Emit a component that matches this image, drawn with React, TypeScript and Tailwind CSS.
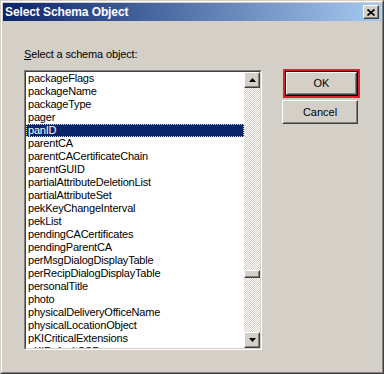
const items = [
  'packageFlags',
  'packageName',
  'packageType',
  'pager',
  'panID',
  'parentCA',
  'parentCACertificateChain',
  'parentGUID',
  'partialAttributeDeletionList',
  'partialAttributeSet',
  'pekKeyChangeInterval',
  'pekList',
  'pendingCACertificates',
  'pendingParentCA',
  'perMsgDialogDisplayTable',
  'perRecipDialogDisplayTable',
  'personalTitle',
  'photo',
  'physicalDeliveryOfficeName',
  'physicalLocationObject',
  'pKICriticalExtensions',
  'pKIDefaultCSPs',
];

const selected = 'panID';

// classic raised bevel: white / face on top-left, dark / shadow on bottom-right
function Raised({ className = '', children }: { className?: string; children?: React.ReactNode }) {
  return (
    <div className={`border border-t-white border-l-white border-b-[#404040] border-r-[#404040] ${className}`}>
      <div className="flex h-full w-full items-center justify-center border border-t-[#d4d0c8] border-l-[#d4d0c8] border-b-[#808080] border-r-[#808080] bg-[#d4d0c8]">
        {children}
      </div>
    </div>
  );
}

function Arrow({ down }: { down?: boolean }) {
  return (
    <svg width="7" height="4" viewBox="0 0 7 4" aria-hidden="true">
      <path d={down ? 'M0 0h7L3.5 4z' : 'M3.5 0 7 4H0z'} fill="#000" />
    </svg>
  );
}

function CloseGlyph() {
  return (
    <svg width="8" height="7" viewBox="0 0 8 7" aria-hidden="true">
      <path d="M0.5 0.5 7.5 6.5M7.5 0.5 0.5 6.5" stroke="#000" strokeWidth="1.7" />
    </svg>
  );
}

function Button({ label, isDefault }: { label: string; isDefault?: boolean }) {
  if (isDefault) {
    return (
      <div className="ml-[1px] h-[29px] w-[77px] border-2 border-[#e0202a]">
        <div className="h-full w-full border border-black">
          <Raised className="h-full w-full">
            <span className="text-[11px] text-black">{label}</span>
          </Raised>
        </div>
      </div>
    );
  }
  return (
    <Raised className="mt-[2px] h-[24px] w-[76px]">
      <span className="text-[11px] text-black">{label}</span>
    </Raised>
  );
}

function ScrollBar() {
  return (
    <div className="flex w-[16px] flex-col">
      <Raised className="h-[16px] w-[16px]">
        <Arrow />
      </Raised>
      <div className="flex flex-1 flex-col [background:repeating-conic-gradient(#d4d0c8_0%_25%,#ffffff_0%_50%)_0_0/2px_2px]">
        <div className="h-[182px]" />
        <Raised className="h-[8px] w-[16px]" />
      </div>
      <Raised className="h-[16px] w-[16px]">
        <Arrow down />
      </Raised>
    </div>
  );
}

export default function App() {
  return (
    <div className="h-[374px] w-[384px] font-['Liberation_Sans',Arial,sans-serif] text-black">
      <div className="h-full w-full border border-t-[#d4d0c8] border-l-[#d4d0c8] border-b-[#404040] border-r-[#404040]">
        <div className="flex h-full w-full flex-col border border-t-white border-l-white border-b-[#808080] border-r-[#808080] bg-[#d4d0c8] p-[1px]">
          <div className="flex h-[18px] items-center justify-between bg-[linear-gradient(90deg,#0a246a,#a6caf0)] pl-[2px] pr-[2px]">
            <span className="text-[12px] font-bold leading-[18px] tracking-[-0.1px] text-white">Select Schema Object</span>
            <Raised className="h-[14px] w-[16px]">
              <CloseGlyph />
            </Raised>
          </div>

          <div className="flex flex-1 items-start pl-[21px]">
            <div className="mt-[27px] flex w-[238px] flex-col">
              <div className="text-[11px] leading-[13px] tracking-[-0.15px]">
                <span className="underline underline-offset-[1px]">S</span>elect a schema object:
              </div>
              <div className="mt-[9px] h-[280px] border border-t-[#808080] border-l-[#808080] border-b-white border-r-white">
                <div className="flex h-full w-full border border-t-[#404040] border-l-[#404040] border-b-[#d4d0c8] border-r-[#d4d0c8] bg-white">
                  <ul className="flex-1 overflow-hidden">
                    {items.map((name) => (
                      <li
                        key={name}
                        className={
                          name === selected
                            ? 'h-[13px] border border-dotted border-[#e8e070] bg-[#0a246a] pl-[1px] text-[11px] leading-[11px] tracking-[-0.2px] whitespace-nowrap text-white'
                            : 'h-[13px] pl-[2px] text-[11px] leading-[13px] tracking-[-0.2px] whitespace-nowrap'
                        }
                      >
                        {name}
                      </li>
                    ))}
                  </ul>
                  <ScrollBar />
                </div>
              </div>
            </div>

            <div className="ml-[20px] mt-[48px] flex flex-col">
              <Button label="OK" isDefault />
              <Button label="Cancel" />
            </div>
          </div>
        </div>
      </div>
    </div>
  );
}
